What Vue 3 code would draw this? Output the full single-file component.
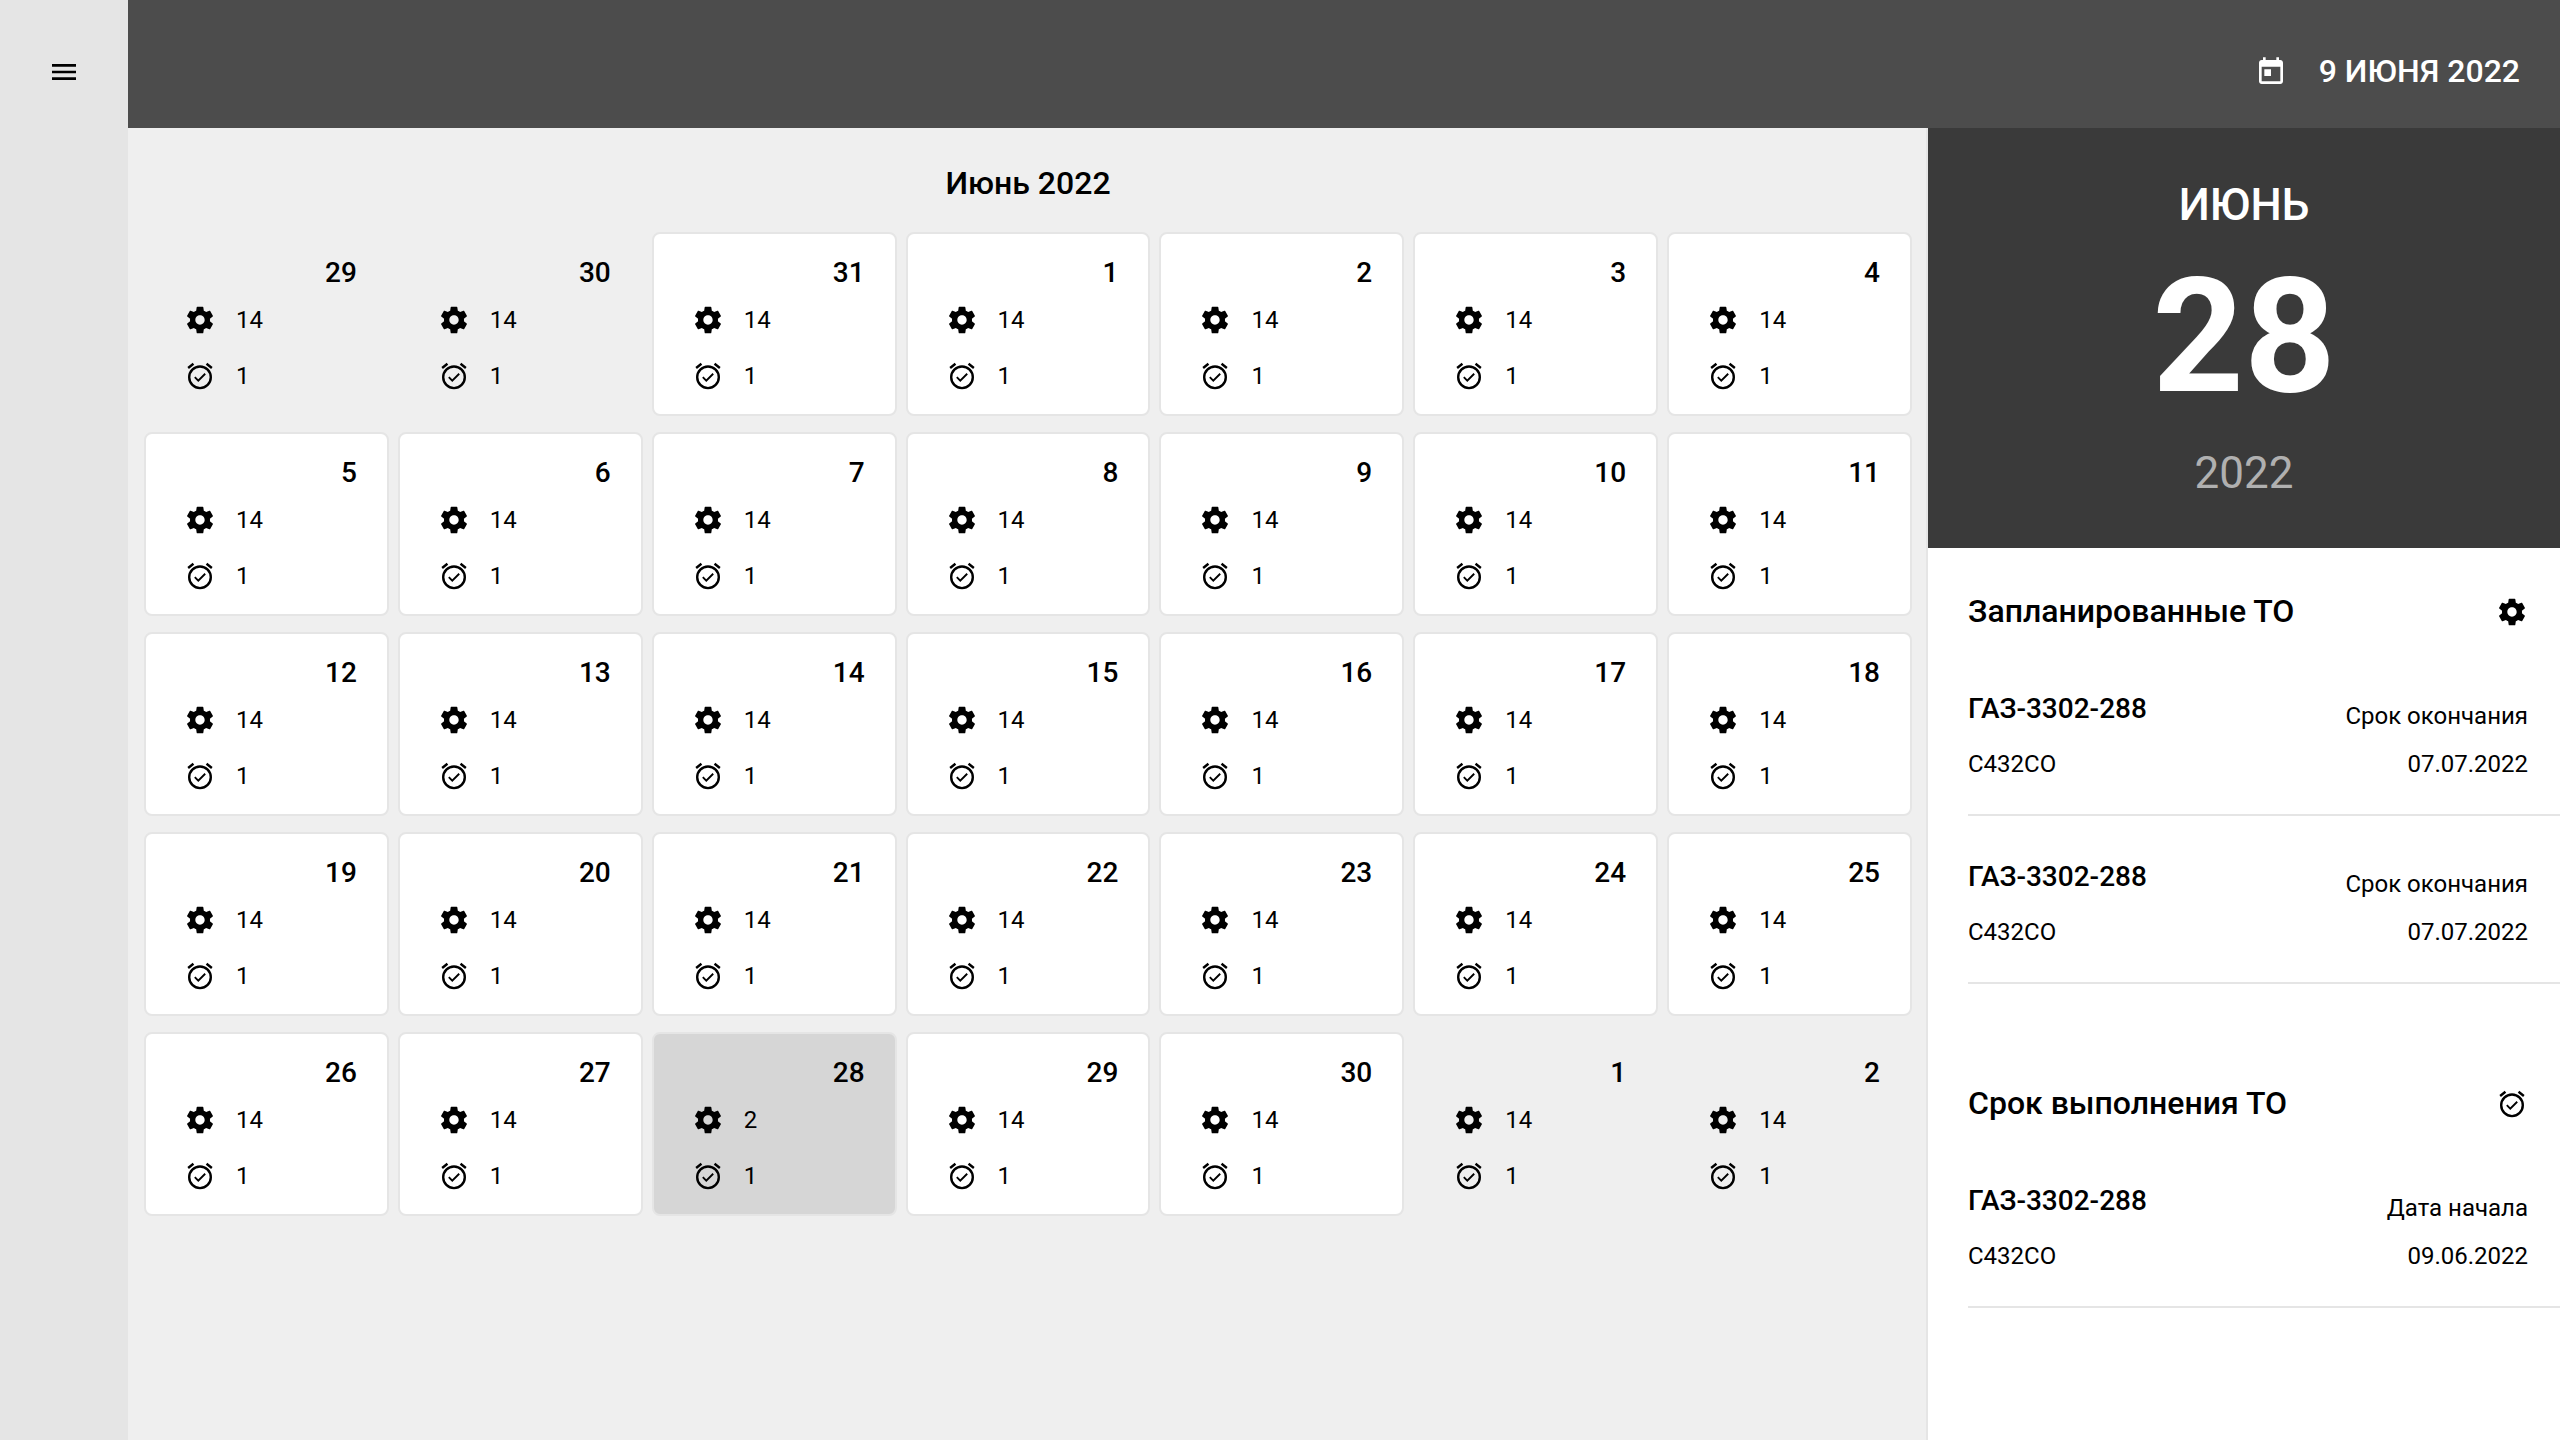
<script setup>
import { ref } from 'vue'

const dayNumbers = [
  29, 30, 31, 1, 2, 3, 4,
  5, 6, 7, 8, 9, 10, 11,
  12, 13, 14, 15, 16, 17, 18,
  19, 20, 21, 22, 23, 24, 25,
  26, 27, 28, 29, 30, 1, 2,
]

const selected = ref(30)

const days = dayNumbers.map((number, index) => ({
  number,
  outside: index < 2 || index > 32,
  planned: index === 30 ? 2 : 14,
  due: 1,
}))

const sections = [
  {
    title: 'Запланированные ТО',
    icon: 'gear',
    items: [
      { name: 'ГАЗ-3302-288', plate: 'С432СО', label: 'Срок окончания', date: '07.07.2022' },
      { name: 'ГАЗ-3302-288', plate: 'С432СО', label: 'Срок окончания', date: '07.07.2022' },
    ],
  },
  {
    title: 'Срок выполнения ТО',
    icon: 'alarm',
    items: [
      { name: 'ГАЗ-3302-288', plate: 'С432СО', label: 'Дата начала', date: '09.06.2022' },
    ],
  },
]
</script>

<template>
  <div class="app">
    <svg class="sprite" aria-hidden="true">
      <symbol id="gear" viewBox="0 0 24 24">
        <path d="M19.43 12.98c.04-.32.07-.64.07-.98s-.03-.66-.07-.98l2.11-1.65c.19-.15.24-.42.12-.64l-2-3.46c-.12-.22-.39-.3-.61-.22l-2.49 1c-.52-.4-1.08-.73-1.69-.98l-.38-2.65C14.46 2.18 14.25 2 14 2h-4c-.25 0-.46.18-.49.42l-.38 2.65c-.61.25-1.17.59-1.69.98l-2.49-1c-.23-.09-.49 0-.61.22l-2 3.46c-.13.22-.07.49.12.64l2.11 1.65c-.04.32-.07.65-.07.98s.03.66.07.98l-2.11 1.65c-.19.15-.24.42-.12.64l2 3.46c.12.22.39.3.61.22l2.49-1c.52.4 1.08.73 1.69.98l.38 2.65c.03.24.24.42.49.42h4c.25 0 .46-.18.49-.42l.38-2.65c.61-.25 1.17-.59 1.69-.98l2.49 1c.23.09.49 0 .61-.22l2-3.46c.12-.22.07-.49-.12-.64l-2.11-1.65zM12 15.5c-1.93 0-3.5-1.57-3.5-3.5s1.57-3.5 3.5-3.5 3.5 1.57 3.5 3.5-1.57 3.5-3.5 3.5z" />
      </symbol>
      <symbol id="alarm" viewBox="0 0 24 24">
        <g fill="none" stroke="currentColor">
          <circle cx="12" cy="13" r="8.1" stroke-width="1.8" />
          <path d="M3.1 6 7.1 2.8M20.9 6 16.9 2.8" stroke-width="1.8" />
          <path d="m8.1 12.9 2.6 2.6 5.2-5.2" stroke-width="1.4" />
        </g>
      </symbol>
      <symbol id="today" viewBox="0 0 24 24">
        <path d="M19 3h-1V1h-2v2H8V1H6v2H5c-1.11 0-1.99.9-1.99 2L3 19c0 1.1.89 2 2 2h14c1.1 0 2-.9 2-2V5c0-1.1-.9-2-2-2zm0 16H5V8h14v11zM7 10h5v5H7v-5z" />
      </symbol>
      <symbol id="menu" viewBox="0 0 24 24">
        <path d="M3 18h18v-2H3v2zm0-5h18v-2H3v2zm0-7v2h18V6H3z" />
      </symbol>
    </svg>

    <nav class="rail">
      <button class="plain" type="button" aria-label="Меню">
        <svg class="icon"><use href="#menu" /></svg>
      </button>
    </nav>

    <div class="page">
      <header class="topbar">
        <button class="plain today" type="button">
          <svg class="icon"><use href="#today" /></svg>
          <span class="today-text">9 ИЮНЯ 2022</span>
        </button>
      </header>

      <div class="content">
        <main class="calendar">
          <h1 class="month-title">Июнь 2022</h1>
          <div class="grid">
            <button
              v-for="(day, index) in days"
              :key="index"
              type="button"
              class="day"
              :class="{ outside: day.outside, selected: index === selected }"
              @click="selected = index"
            >
              <span class="day-number">{{ day.number }}</span>
              <span class="count planned">
                <svg class="icon"><use href="#gear" /></svg>{{ day.planned }}
              </span>
              <span class="count due">
                <svg class="icon"><use href="#alarm" /></svg>{{ day.due }}
              </span>
            </button>
          </div>
        </main>

        <aside class="panel">
          <div class="hero">
            <span class="hero-month">ИЮНЬ</span>
            <span class="hero-day">28</span>
            <span class="hero-year">2022</span>
          </div>

          <section v-for="section in sections" :key="section.title" class="section">
            <div class="section-head">
              <h2>{{ section.title }}</h2>
              <svg class="icon"><use :href="'#' + section.icon" /></svg>
            </div>
            <ul>
              <li v-for="(item, index) in section.items" :key="index" class="item">
                <div class="vehicle">
                  <span class="vehicle-name">{{ item.name }}</span>
                  <span>{{ item.plate }}</span>
                </div>
                <div class="term">
                  <span>{{ item.label }}</span>
                  <span>{{ item.date }}</span>
                </div>
              </li>
            </ul>
          </section>
        </aside>
      </div>
    </div>
  </div>
</template>

<style>
body {
  margin: 0;
}
</style>

<style scoped>
.app {
  display: flex;
  min-height: 100vh;
  font-family: Roboto, sans-serif;
  font-size: 24px;
  line-height: 28px;
  color: #000;
  background: #efefef;
}

.app * {
  box-sizing: border-box;
}

.sprite {
  position: absolute;
  width: 0;
  height: 0;
}

.icon {
  display: block;
  flex: none;
  width: 32px;
  height: 32px;
  fill: currentColor;
}

.plain {
  padding: 0;
  border: 0;
  background: none;
  color: inherit;
  font: inherit;
  cursor: pointer;
}

.rail {
  flex: 0 0 128px;
  display: flex;
  flex-direction: column;
  align-items: center;
  padding-top: 56px;
  background: #e5e5e5;
}

.page {
  flex: 1;
  min-width: 0;
  display: flex;
  flex-direction: column;
}

.topbar {
  display: flex;
  justify-content: flex-end;
  padding: 56px 40px 40px;
  background: #4c4c4c;
  color: #fff;
}

.today {
  display: flex;
  align-items: flex-end;
  gap: 32px;
  height: 32px;
}

.today-text {
  font-size: 32px;
  font-weight: 500;
  line-height: 34px;
}

.content {
  flex: 1;
  display: flex;
}

.calendar {
  flex: 1;
  min-width: 0;
  padding: 36px 14px 36px 16px;
  border-right: 2px solid #e5e5e5;
}

.month-title {
  margin: 0 0 30px;
  font-size: 32px;
  font-weight: 500;
  line-height: 38px;
  text-align: center;
}

.grid {
  display: grid;
  grid-template-columns: repeat(7, minmax(0, 1fr));
  gap: 16px 9px;
}

.day {
  display: flex;
  flex-direction: column;
  padding: 22px 30px 22px 38px;
  border: 2px solid #e5e5e5;
  border-radius: 8px;
  background: #fff;
  color: inherit;
  font: inherit;
  text-align: left;
  cursor: pointer;
}

.day.outside {
  border-color: transparent;
  background: none;
}

.day.selected {
  background: #d6d6d6;
}

.day-number {
  align-self: flex-end;
  font-size: 28px;
  font-weight: 500;
  line-height: 34px;
}

.count {
  display: flex;
  align-items: center;
  gap: 20px;
}

.planned {
  margin-top: 14px;
}

.due {
  margin-top: 24px;
}

.panel {
  flex: 0 0 632px;
  background: #fff;
}

.hero {
  display: flex;
  flex-direction: column;
  align-items: center;
  padding: 50px 0 48px;
  background: #3a3a3a;
  color: #fff;
}

.hero-month,
.hero-year {
  font-size: 44px;
  line-height: 54px;
}

.hero-month {
  font-weight: 500;
}

.hero-day {
  margin: 12px 0 16px;
  font-size: 160px;
  font-weight: 700;
  line-height: 186px;
}

.hero-year {
  color: #b0b0b0;
}

.section {
  padding: 46px 0 56px 40px;
}

.section-head {
  display: flex;
  align-items: flex-end;
  justify-content: space-between;
  margin-bottom: 20px;
  padding-right: 32px;
}

.section-head h2 {
  margin: 0;
  font-size: 32px;
  font-weight: 500;
  line-height: 34px;
}

.section ul {
  margin: 0;
  padding: 0;
  list-style: none;
}

.item {
  display: flex;
  align-items: flex-end;
  justify-content: space-between;
  padding: 44px 32px 36px 0;
  border-bottom: 2px solid #e5e5e5;
}

.vehicle,
.term {
  display: flex;
  flex-direction: column;
}

.vehicle {
  gap: 24px;
}

.term {
  align-items: flex-end;
  gap: 20px;
}

.vehicle-name {
  font-size: 28px;
  font-weight: 500;
  line-height: 34px;
}
</style>
